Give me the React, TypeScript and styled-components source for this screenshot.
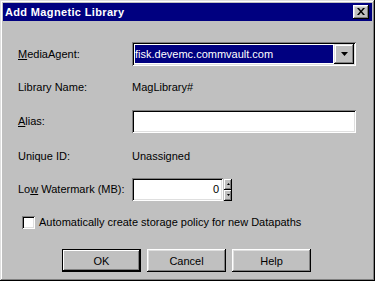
import React from "react";
import styled, { createGlobalStyle } from "styled-components";

const Global = createGlobalStyle`
  html, body { margin: 0; padding: 0; background: #c0c0c0; }
  body { font-family: "Liberation Sans", Arial, sans-serif; font-size: 11px; color: #000; }
  * { box-sizing: border-box; }
`;

const Window = styled.div`
  width: 375px;
  height: 281px;
  background: #c0c0c0;
  padding: 3px;
  box-shadow: inset -1px -1px #000, inset 1px 1px #dfdfdf, inset -2px -2px #808080, inset 2px 2px #fff;
  display: flex;
  flex-direction: column;
`;

const TitleBar = styled.div`
  height: 18px;
  background: #000080;
  color: #fff;
  display: flex;
  align-items: center;
  justify-content: space-between;
  padding: 0 3px 0 2px;
`;

const TitleText = styled.span`
  font-weight: bold;
  font-size: 11px;
  letter-spacing: 0.35px;
  line-height: 13px;
`;

const CloseButton = styled.div`
  width: 16px;
  height: 14px;
  background: #c0c0c0;
  box-shadow: inset -1px -1px #000, inset 1px 1px #fff, inset -2px -2px #808080, inset 2px 2px #dfdfdf;
  display: flex;
  align-items: center;
  justify-content: center;
  padding-bottom: 1px;
  padding-right: 1px;
`;

const Body = styled.div`
  padding-left: 15px;
  display: flex;
  flex-direction: column;
`;

const Row = styled.div<{ $mt: number; $h: number; $indent?: number }>`
  display: flex;
  align-items: center;
  margin-top: ${(p) => p.$mt}px;
  height: ${(p) => p.$h}px;
  padding-left: ${(p) => p.$indent ?? 0}px;
  line-height: 13px;
`;

const Label = styled.span`
  width: 114px;
  flex: none;
  white-space: nowrap;
`;

const Key = styled.span`
  text-decoration: underline;
`;

const Sunken = styled.div<{ $w: number; $h: number }>`
  width: ${(p) => p.$w}px;
  height: ${(p) => p.$h}px;
  background: #fff;
  box-shadow: inset 1px 1px #808080, inset -1px -1px #fff, inset 2px 2px #000, inset -2px -2px #dfdfdf;
  padding: 2px;
  display: flex;
  align-items: center;
`;

const Selected = styled.div`
  flex: 1;
  height: 18px;
  margin: 0 1px 0 1px;
  background: #000080;
  color: #fff;
  display: flex;
  align-items: center;
  white-space: nowrap;
  overflow: hidden;
`;

const DropButton = styled.div`
  width: 20px;
  height: 20px;
  flex: none;
  background: #c0c0c0;
  box-shadow: inset -1px -1px #000, inset 1px 1px #dfdfdf, inset -2px -2px #808080, inset 2px 2px #fff;
  display: flex;
  align-items: center;
  justify-content: center;
`;

const Value = styled.div<{ $right?: boolean }>`
  flex: 1;
  text-align: ${(p) => (p.$right ? "right" : "left")};
  padding: 0 2px;
`;

const SpinGroup = styled.div`
  display: flex;
  align-items: center;
  gap: 1px;
`;

const Spinner = styled.div`
  display: flex;
  flex-direction: column;
  gap: 0px;
  height: 23px;
  justify-content: center;
`;

const SpinButton = styled.div`
  width: 8px;
  height: 11px;
  background: #c0c0c0;
  box-shadow: inset -1px -1px #000, inset 1px 1px #fff, inset -2px -2px #808080;
  display: flex;
  align-items: center;
  justify-content: center;
`;

const Check = styled.div`
  width: 13px;
  height: 13px;
  flex: none;
  background: #fff;
  box-shadow: inset 1px 1px #808080, inset -1px -1px #fff, inset 2px 2px #000, inset -2px -2px #dfdfdf;
  margin-right: 4px;
`;

const Buttons = styled.div`
  display: flex;
  gap: 6px;
  margin-top: 16px;
  padding-left: 44px;
`;

const Button = styled.div<{ $default?: boolean }>`
  width: 79px;
  height: 23px;
  background: #c0c0c0;
  display: flex;
  align-items: center;
  justify-content: center;
  ${(p) =>
    p.$default
      ? `box-shadow: inset 0 0 0 1px #000, inset -2px -2px #000, inset 2px 2px #fff, inset -3px -3px #808080;`
      : `box-shadow: inset -1px -1px #000, inset 1px 1px #fff, inset -2px -2px #808080, inset 2px 2px #dfdfdf;`}
`;

const Arrow = ({ up, size = 7 }: { up?: boolean; size?: number }) => {
  const h = Math.ceil(size / 2);
  return (
    <svg width={size} height={h} viewBox={`0 0 ${size} ${h}`}>
      <polygon
        points={up ? `${size / 2},0 ${size},${h} 0,${h}` : `0,0 ${size},0 ${size / 2},${h}`}
        fill="#000"
      />
    </svg>
  );
};

export default function App() {
  return (
    <>
      <Global />
      <Window>
        <TitleBar>
          <TitleText>Add Magnetic Library</TitleText>
          <CloseButton>
            <svg width="8" height="7" viewBox="0 0 8 7">
              <path d="M0 0h2l2 2.5L6 0h2L5 3.5 8 7H6L4 4.5 2 7H0l3-3.5z" fill="#000" />
            </svg>
          </CloseButton>
        </TitleBar>
        <Body>
          <Row $mt={21} $h={24}>
            <Label>
              <Key>M</Key>ediaAgent:
            </Label>
            <Sunken $w={224} $h={24}>
              <Selected>fisk.devemc.commvault.com</Selected>
              <DropButton>
                <Arrow />
              </DropButton>
            </Sunken>
          </Row>
          <Row $mt={9} $h={24}>
            <Label>Library Name:</Label>
            <span>MagLibrary#</span>
          </Row>
          <Row $mt={11} $h={23}>
            <Label>
              <Key>A</Key>lias:
            </Label>
            <Sunken $w={224} $h={23} />
          </Row>
          <Row $mt={12} $h={23}>
            <Label>Unique ID:</Label>
            <span>Unassigned</span>
          </Row>
          <Row $mt={10} $h={23}>
            <Label>
              Lo<Key>w</Key> Watermark (MB):
            </Label>
            <SpinGroup>
              <Sunken $w={91} $h={23}>
                <Value $right>0</Value>
              </Sunken>
              <Spinner>
                <SpinButton>
                  <Arrow up size={3} />
                </SpinButton>
                <SpinButton>
                  <Arrow size={3} />
                </SpinButton>
              </Spinner>
            </SpinGroup>
          </Row>
          <Row $mt={10} $h={22} $indent={4}>
            <Check />
            <span>Automatically create storage policy for new Datapaths</span>
          </Row>
          <Buttons>
            <Button $default>OK</Button>
            <Button>Cancel</Button>
            <Button>Help</Button>
          </Buttons>
        </Body>
      </Window>
    </>
  );
}
